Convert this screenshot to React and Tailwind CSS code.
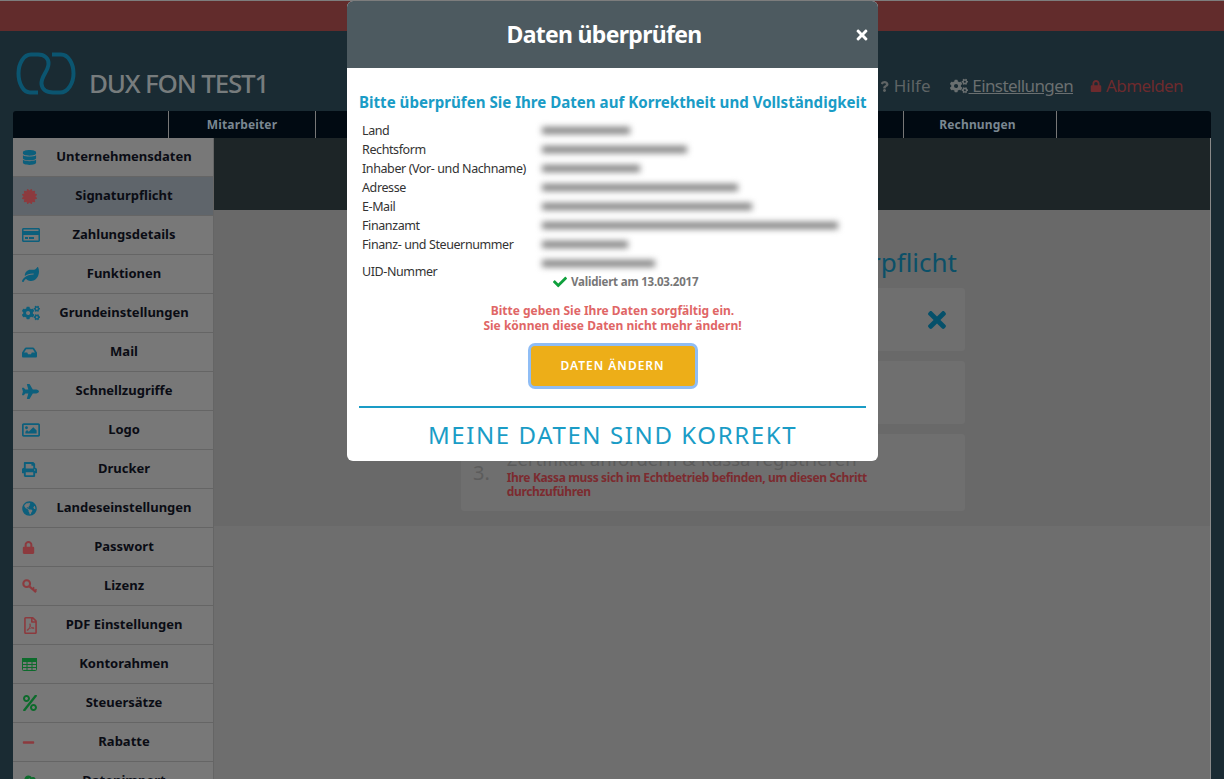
import {
  FaDatabase,
  FaCertificate,
  FaRegCreditCard,
  FaLeaf,
  FaCogs,
  FaInbox,
  FaPlane,
  FaRegImage,
  FaPrint,
  FaGlobeAmericas,
  FaLock,
  FaRegFilePdf,
  FaPercent,
  FaMinus,
  FaCloudUploadAlt,
  FaTimes,
  FaCheck,
  FaQuestion,
} from "react-icons/fa";

const teal = "text-[#0c5f7c]";
const red = "text-[#8c3a3e]";
const green = "text-[#0d6b2c]";

// outlined key, head up left
const KeyIcon = ({ size }) => (
  <svg width={size} height={size} viewBox="0 0 16 16" fill="none" stroke="currentColor" className="shrink-0">
    <circle cx="5" cy="5" r="3.6" strokeWidth="2.2" />
    <path d="M8 8 L15 14" strokeWidth="2.4" />
    <path d="M11 11 L13 9 M13.5 13 L15.5 11" strokeWidth="1.8" />
  </svg>
);

const TableIcon = ({ size }) => (
  <svg width={size} height={size} viewBox="0 0 15 13" fill="none" stroke="currentColor" strokeWidth="1" className="shrink-0">
    <rect x="0.5" y="0.5" width="14" height="12" rx="1" />
    <rect x="0.5" y="0.5" width="14" height="3" fill="currentColor" />
    <path d="M5 3.5 V12.5 M10 3.5 V12.5 M0.5 6.5 H14.5 M0.5 9.5 H14.5" />
  </svg>
);

const menu = [
  { label: "Unternehmensdaten", icon: FaDatabase, color: teal, size: 15 },
  { label: "Signaturpflicht", icon: FaCertificate, color: red, size: 15, active: true },
  { label: "Zahlungsdetails", icon: FaRegCreditCard, color: teal, size: 18 },
  { label: "Funktionen", icon: FaLeaf, color: teal, size: 17 },
  { label: "Grundeinstellungen", icon: FaCogs, color: teal, size: 18 },
  { label: "Mail", icon: FaInbox, color: teal, size: 15 },
  { label: "Schnellzugriffe", icon: FaPlane, color: teal, size: 17 },
  { label: "Logo", icon: FaRegImage, color: teal, size: 18 },
  { label: "Drucker", icon: FaPrint, color: teal, size: 15 },
  { label: "Landeseinstellungen", icon: FaGlobeAmericas, color: teal, size: 15 },
  { label: "Passwort", icon: FaLock, color: red, size: 13 },
  { label: "Lizenz", icon: KeyIcon, color: red, size: 15 },
  { label: "PDF Einstellungen", icon: FaRegFilePdf, color: red, size: 17 },
  { label: "Kontorahmen", icon: TableIcon, color: green, size: 15 },
  { label: "Steuersätze", icon: FaPercent, color: green, size: 16 },
  { label: "Rabatte", icon: FaMinus, color: red, size: 13 },
  { label: "Datenimport", icon: FaCloudUploadAlt, color: green, size: 16 },
];

const rows = [
  { label: "Land", width: "w-[88px]" },
  { label: "Rechtsform", width: "w-[145px]" },
  { label: "Inhaber (Vor- und Nachname)", width: "w-[98px]" },
  { label: "Adresse", width: "w-[196px]" },
  { label: "E-Mail", width: "w-[210px]" },
  { label: "Finanzamt", width: "w-[296px]" },
  { label: "Finanz- und Steuernummer", width: "w-[86px]" },
];

const App = () => {
  return (
    <div className="relative h-[779px] overflow-hidden bg-[#1a2b33] font-['Noto_Sans',sans-serif]">
      <div className="h-[31px] border-t border-[#7d7d7d] bg-[#622c2c]" />

      <header className="flex h-[80px] items-start justify-between pl-4 pr-[41px]">
        <div className="flex items-start pt-[21px]">
          <svg width="60" height="43" viewBox="0 0 60 43" fill="none" stroke="#0b5570" strokeWidth="4">
            <path d="M22 40.5 H14 C7 40.5 2.5 31 2.5 21.5 C2.5 11 8 2.5 15 2.5 H22 C29 2.5 33 7 32.5 12 C32 20 25 24 25.5 32 C26 37 30 40.5 37 40.5 H44 C52 40.5 57.5 31 57.5 21.5 C57.5 11 52 2.5 45 2.5 H36" />
          </svg>
          <span className="ml-[13px] mt-[15px] text-[26px] leading-8 font-medium tracking-[-1.2px] text-[#777c7d]">
            DUX FON TEST1
          </span>
        </div>
        <nav className="flex items-center gap-5 pt-[43px] text-[17px] leading-6 tracking-[-0.6px]">
          <span className="flex items-center gap-1 tracking-normal text-[#5f6465]">
            <FaQuestion size={11} />
            Hilfe
          </span>
          <span className="flex items-center text-[#6a6f70] underline">
            <FaCogs size={18} />
            &nbsp;Einstellungen
          </span>
          <span className="-ml-[3px] flex items-center gap-1 text-[#6d2a2d]">
            <FaLock size={12} />
            Abmelden
          </span>
        </nav>
      </header>

      <div className="mx-[13px]">
        <div className="flex h-[27px] rounded-t-[3px] bg-[#010a12] pl-[155px] text-[12px] font-bold tracking-[0.15px] text-[#7a8791]">
          <div className="flex w-[148px] items-center justify-center border-x border-[#777]">Mitarbeiter</div>
          <div className="w-[587px]" />
          <div className="flex w-[154px] items-center justify-center border-x border-[#777] pr-[5px]">Rechnungen</div>
        </div>

        <div className="flex">
          <aside className="w-[201px] shrink-0">
            {menu.map((item) => (
              <div
                key={item.label}
                className={`flex h-[39px] items-center border-b border-r border-[#656565] pl-[9px] ${
                  item.active ? "bg-[#5f656b]" : "bg-[#787878]"
                }`}
              >
                <span className={`flex w-[13px] shrink-0 ${item.color}`}>
                  <item.icon size={item.size} className="shrink-0" />
                </span>
                <span className="flex-1 text-center text-[13px] font-bold text-[#0a0c14]">{item.label}</span>
              </div>
            ))}
          </aside>

          <main className="flex-1 border-r border-[#8a8a8a] bg-[#6e6e6e]">
            <div className="h-[72px] bg-[#1d2527]" />
            <div className="flex h-[316px] flex-col items-end bg-[#696969] pr-[245px] pt-[37px]">
              <h2 className="mr-[8px] h-[41px] text-[26px] leading-[30px] text-[#0b5068]">Signaturpflicht</h2>
              <div className="flex w-[504px] flex-col gap-[10px]">
                <div className="flex h-[63px] items-center justify-end rounded-[3px] bg-[#6f6f6f] pr-[15px] text-[#05506a]">
                  <FaTimes size={26} />
                </div>
                <div className="h-[63px] rounded-[3px] bg-[#6f6f6f]" />
                <div className="flex h-[77px] gap-[17px] rounded-[3px] bg-[#6f6f6f] pl-3 pt-3">
                  <span className="mt-[15px] text-[20px] leading-6 text-[#5c5c5c]">3.</span>
                  <div>
                    <p className="text-[18.5px] leading-[25px] text-[#5c5c5c]">Zertifikat anfordern & Kassa registrieren</p>
                    <p className="max-w-[365px] text-[12px] font-bold leading-[14px] tracking-[-0.36px] text-[#7c2b2f]">
                      Ihre Kassa muss sich im Echtbetrieb befinden, um diesen Schritt durchzuführen
                    </p>
                  </div>
                </div>
              </div>
            </div>
          </main>
        </div>
      </div>

      {/* dialog over the dimmed page */}
      <div className="absolute left-[347px] top-px w-[531px] overflow-hidden rounded-md bg-white">
        <div className="relative flex h-[67px] items-center justify-center bg-[#4d5a60] pr-[17px]">
          <h1 className="text-[23px] font-bold tracking-[-0.7px] text-white">Daten überprüfen</h1>
          <FaTimes size={16} className="absolute right-[8px] top-[26px] text-white" />
        </div>

        <div className="px-3 pt-6">
          <h3 className="whitespace-nowrap text-center text-[15.1px] leading-5 font-bold text-[#1a9cc6]">
            Bitte überprüfen Sie Ihre Daten auf Korrektheit und Vollständigkeit
          </h3>

          <div className="mt-[10px] pl-[3px] text-[12.5px] tracking-[-0.4px] text-[#333]">
            {rows.map((row) => (
              <div key={row.label} className="flex h-[19px] items-center">
                <span className="w-[180px] shrink-0 whitespace-nowrap">{row.label}</span>
                <span className={`mb-[2px] h-[7px] bg-[#808080] blur-[3px] ${row.width}`} />
              </div>
            ))}
            <div className="flex items-start pt-[3px]">
              <span className="mt-[5px] w-[180px] shrink-0">UID-Nummer</span>
              <div>
                <div className="mt-[2px] h-[7px] w-[113px] bg-[#808080] blur-[3px]" />
                <div className="ml-[11px] mt-[6px] flex items-center gap-1 text-[11.5px] leading-[18px] font-bold tracking-[-0.2px] text-[#777]">
                  <FaCheck size={14} className="text-[#0fa03c]" />
                  Validiert am 13.03.2017
                </div>
              </div>
            </div>
          </div>

          <p className="mt-[12px] text-center text-[12px] leading-[15px] font-bold text-[#e06666]">
            Bitte geben Sie Ihre Daten sorgfältig ein.
            <br />
            Sie können diese Daten nicht mehr ändern!
          </p>

          <div className="mt-[13px] flex justify-center">
            <button className="h-[40px] w-[164px] rounded-[4px] bg-[#edae18] text-[12px] font-semibold tracking-[1px] text-white ring-[3px] ring-[#8fbdf5]">
              DATEN ÄNDERN
            </button>
          </div>

          <div className="mt-[20px] h-[2px] bg-[#1a9cc6]" />

          <p className="pt-[10px] pb-[10px] text-center text-[24px] leading-[33px] tracking-[1.6px] text-[#1a9cc6]">
            MEINE DATEN SIND KORREKT
          </p>
        </div>
      </div>
    </div>
  );
};

export default App;
